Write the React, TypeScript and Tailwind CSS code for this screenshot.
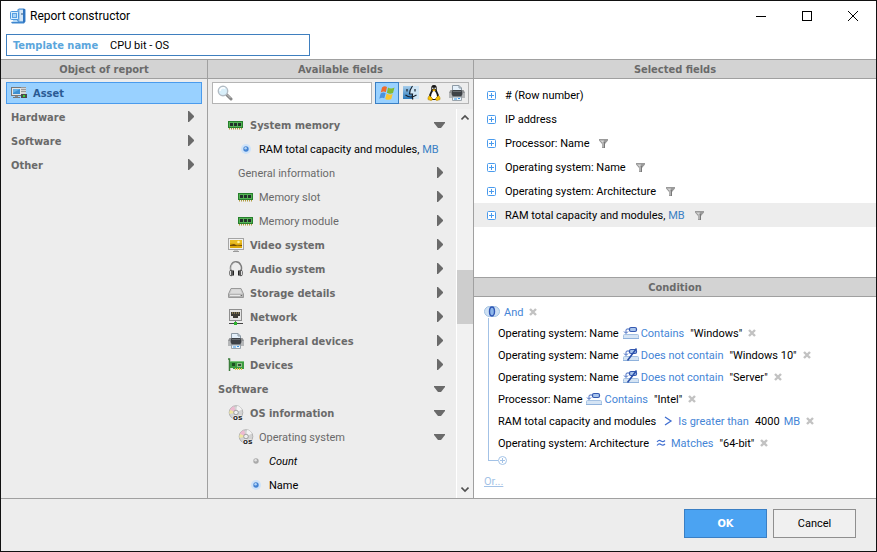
import React from 'react'

type IconProps = { className?: string }

function AppIcon() {
  return (
    <svg width="16" height="16" viewBox="0 0 16 16" className="shrink-0">
      <path d="M7.5 1.5 L9 .5 H14 L15.5 1.5 V13.5 L14 15.5 H2 L1 14 L7 13 Z" fill="#3f87cf" />
      <rect x="8.5" y="1.5" width="5.5" height="12" fill="#a9cdee" />
      <path d="M13 1 H15 V13.5 L14 14.5 H13 Z" fill="#2f74c0" />
      <rect x="10" y="2" width="3" height="11" fill="#d3e5f5" />
      <rect x="11" y="5" width="2" height="2" fill="#7f9cb8" />
      <rect x=".5" y="3.5" width="8" height="8" rx="1" fill="#d8edfc" stroke="#4d97dd" />
      <rect x="2.5" y="5.5" width="4" height="4" fill="#a9d4f7" stroke="#5aa1e3" />
      <path d="M3 12 H7 L8 14 H3 Z" fill="#b3d8f6" />
    </svg>
  )
}

function AssetIcon() {
  return (
    <svg width="16" height="16" viewBox="0 0 16 16" className="shrink-0">
      <rect x=".5" y="2.5" width="10" height="8" fill="#e6e6e6" stroke="#777" />
      <rect x="2" y="4" width="7" height="5" fill="#3d8fd1" />
      <path d="M2 4 H9 L2 8 Z" fill="#63b0e6" />
      <rect x="4" y="11" width="3" height="1" fill="#888" />
      <rect x="2" y="12" width="7" height="1" fill="#777" />
      <rect x="10" y="2" width="5" height="11" fill="#d5d5d5" />
      <path d="M10 2.5 H15 M10 4.5 H15 M10 6.5 H15" stroke="#999" />
      <rect x="10" y="9" width="6" height="4" fill="#4b4b4b" />
      <rect x="12" y="10" width="2" height="2" fill="#37d436" />
    </svg>
  )
}

function SearchIcon() {
  return (
    <svg width="16" height="16" viewBox="0 0 16 16" className="shrink-0">
      <path d="M9.5 9.5 L14 14" stroke="#888" strokeWidth="3" strokeLinecap="round" />
      <path d="M10 9.5 L13.5 13" stroke="#ccc" strokeWidth="1" />
      <circle cx="6" cy="6" r="4.7" fill="#d9effa" stroke="#b3bcc4" strokeWidth="1.4" />
      <path d="M3 6 a3 3 0 0 1 5-2.4" stroke="#fff" strokeWidth="1.4" fill="none" />
    </svg>
  )
}

function WindowsIcon() {
  return (
    <svg width="16" height="16" viewBox="0 0 16 16">
      <path d="M3 2.5 Q5.5 .5 8 2 L6.8 7.2 Q4.5 5.8 1.8 7.5 Z" fill="#ee6a2c" />
      <path d="M9 2.6 Q12 4.5 15.5 2.5 L14 8 Q11 9.5 7.9 7.8 Z" fill="#82bb32" />
      <path d="M1.6 8.5 Q4.2 6.8 6.6 8.2 L5.3 13.3 Q3 12 .3 13.7 Z" fill="#4b92dc" />
      <path d="M7.6 8.8 Q10.5 10.4 13.7 8.9 L12.3 14 Q9.5 15.6 6.2 13.9 Z" fill="#fcc52c" />
    </svg>
  )
}

function MacIcon() {
  return (
    <svg width="16" height="16" viewBox="0 0 16 16">
      <defs>
        <linearGradient id="finder" x1="0" y1="0" x2="0" y2="1">
          <stop offset="0" stopColor="#a5cdeb" />
          <stop offset="1" stopColor="#2a78bb" />
        </linearGradient>
      </defs>
      <rect x="0" y="1" width="9" height="13" fill="url(#finder)" />
      <path d="M9.5 1 H16 V14 H9.5 L9 9 H6.5 Q6.5 5 9.5 1 Z" fill="#cfe5f5" />
      <path d="M9.5 1 Q6.5 5 6.5 9 H9.5 Q9 11.5 9.8 14.5" stroke="#16212e" strokeWidth="1.2" fill="none" />
      <path d="M2.5 10 Q7.5 14 13.5 10 M4 4 V6.5 M12 4 V6.5" stroke="#16212e" strokeWidth="1.2" fill="none" />
    </svg>
  )
}

function LinuxIcon() {
  return (
    <svg width="16" height="16" viewBox="0 0 16 16">
      <path d="M8 0 C5.5 0 5 2 5.3 4.5 C5.3 6.5 3 8.5 2.7 12 L6 15 H10 L13.3 12 C13 8.5 10.7 6.5 10.7 4.5 C11 2 10.5 0 8 0 Z" fill="#171717" />
      <path d="M8 5.5 C6.5 6.5 5 9 5 12 L6.5 14 H9.5 L11 12 C11 9 9.5 6.5 8 5.5 Z" fill="#fff" />
      <circle cx="6.8" cy="3.3" r=".8" fill="#fff" />
      <circle cx="9.2" cy="3.3" r=".8" fill="#fff" />
      <path d="M6 5 Q8 3.5 10 5 L8 6.5 Z" fill="#f5b400" />
      <path d="M3.5 10.5 L6.5 13.5 Q6.5 15.7 5 15.5 L2 14.6 Q1.5 12.5 3.5 10.5 Z M12.5 10.5 L9.5 13.5 Q9.5 15.7 11 15.5 L14 14.6 Q14.5 12.5 12.5 10.5 Z" fill="#f8c200" stroke="#a87800" strokeWidth=".5" />
    </svg>
  )
}

function PrinterIcon({ className }: IconProps) {
  return (
    <svg width="16" height="16" viewBox="0 0 16 16" className={className}>
      <path d="M3.5 6 V.5 H10 L12.5 3 V6 Z" fill="#e4f0fa" stroke="#8d9aa5" />
      <path d="M10 .5 V3 H12.5" fill="none" stroke="#8d9aa5" />
      <path d="M1.5 5 H14.5 L16 7.5 V13 H0 V7.5 Z" fill="#8f9193" />
      <path d="M0 8 H3 V13 H0 Z M13 8 H16 V13 H13 Z" fill="#b5b7b9" />
      <path d="M3.5 5 H12.5 L13.5 9 L12 11.5 H4 L2.5 9 Z" fill="#3d4146" />
      <rect x="4" y="6" width="8" height="1" fill="#686d72" />
      <path d="M3.5 12 H12.5 V15.5 H3.5 Z" fill="#e9f4fd" stroke="#9aa4ac" />
      <path d="M5 14 H8 M9 13.5 H11" stroke="#3b93e0" />
    </svg>
  )
}

function MemoryIcon() {
  return (
    <svg width="16" height="16" viewBox="0 0 16 16">
      <rect x=".5" y="4.5" width="14" height="6" fill="#55b255" stroke="#26802c" />
      <path d="M2 6 H5 V9 H2 Z M6 6 H9 V9 H6 Z M10 6 H13 V9 H10 Z" fill="#22322a" />
      <path d="M1 11.5 H14" stroke="#b09a3a" strokeWidth="2" strokeDasharray="1 1" />
      <path d="M0 10.5 H15" stroke="#2b7f2f" />
    </svg>
  )
}

function VideoIcon() {
  return (
    <svg width="16" height="16" viewBox="0 0 16 16">
      <rect x=".5" y="1.5" width="15" height="11" fill="#f1f1f1" stroke="#a4a4a4" />
      <rect x="2" y="3" width="12" height="8" fill="#dba80c" />
      <path d="M2 3 H14 V6 L9 7 L2 6 Z" fill="#e9bd25" />
      <circle cx="10.5" cy="5" r="1.3" fill="#fff3a8" />
      <path d="M2 8 L6 7 L9 8.5 L14 8 V9 H2 Z" fill="#6f4b08" />
      <rect x="6" y="13" width="4" height="1" fill="#c5c5c5" />
      <rect x="5" y="14" width="6" height="1" fill="#999" />
    </svg>
  )
}

function AudioIcon() {
  return (
    <svg width="16" height="16" viewBox="0 0 16 16">
      <path d="M3.5 11 Q1.5 7 3.3 3.8 Q4.8 .8 8 .8 Q11.2 .8 12.7 3.8 Q14.5 7 12.5 11" fill="none" stroke="#7d7d7d" strokeWidth="1.5" />
      <path d="M3.5 11 Q2 7 3.8 4 Q5 1.5 8 1.5" fill="none" stroke="#d8d8d8" strokeWidth=".6" />
      <ellipse cx="3.3" cy="12" rx="2.1" ry="3.2" fill="#5a5a5a" />
      <ellipse cx="12.7" cy="12" rx="2.1" ry="3.2" fill="#5a5a5a" />
      <path d="M2.5 10 V14 M13.5 10 V14" stroke="#ddd" />
      <path d="M5.5 9.5 V14.5 M10.5 9.5 V14.5" stroke="#222" />
    </svg>
  )
}

function StorageIcon() {
  return (
    <svg width="16" height="16" viewBox="0 0 16 16">
      <path d="M3 3.5 H13 L15.5 9 V12.5 H.5 V9 Z" fill="#cfcfcf" stroke="#999" />
      <path d="M4 4.5 H12 L13.5 8 H2.5 Z" fill="#dcdcdc" />
      <rect x="1" y="9" width="14" height="3" fill="#b5b5b5" />
      <path d="M2 10.5 H12" stroke="#e9e9e9" />
      <rect x="13" y="10" width="1" height="1" fill="#6b6b6b" />
    </svg>
  )
}

function NetworkIcon() {
  return (
    <svg width="16" height="16" viewBox="0 0 16 16">
      <rect x="1.5" y=".5" width="12" height="11" fill="#e4e4e4" stroke="#8f8f8f" />
      <path d="M3 3 H12 V7 H10 V9 H5 V7 H3 Z" fill="#3c3a35" />
      <path d="M4.5 3 V5 M6.5 3 V5 M8.5 3 V5 M10.5 3 V5" stroke="#857752" />
      <path d="M7.5 12 V14" stroke="#666" />
      <path d="M1 14.5 H15" stroke="#444" />
      <rect x="6" y="13" width="3" height="3" fill="#2cb52e" />
    </svg>
  )
}

function CardIcon() {
  return (
    <svg width="16" height="16" viewBox="0 0 16 16">
      <path d="M0 2 H1.5 V14" fill="none" stroke="#3c7d3c" strokeWidth="1.5" />
      <path d="M2 4 H16 V12 H5 V11 H2 Z" fill="#3c9c40" />
      <path d="M2 4.5 H16" stroke="#7cc67c" />
      <rect x="4" y="6" width="3" height="3" fill="#1d4f22" />
      <rect x="9" y="6" width="5" height="4" fill="#8fbf87" />
      <rect x="10" y="7" width="3" height="2" fill="#31523a" />
      <path d="M7 12 H15" stroke="#e3c548" strokeWidth="2" strokeDasharray="1 1" />
    </svg>
  )
}

function DiscIcon() {
  return (
    <svg width="16" height="16" viewBox="0 0 16 16">
      <circle cx="8" cy="7.5" r="6.8" fill="#d3d3d3" stroke="#a6a6a6" strokeWidth=".8" />
      <path d="M8 7.5 L1.8 5 Q3 2 6 1.2 Z" fill="#eebad0" />
      <path d="M8 7.5 L2 5 Q1 7 1.5 9 Z" fill="#efe6a0" />
      <path d="M8 7.5 L9 .9 Q12.5 1.2 14 4.5 Z" fill="#f3f3f3" />
      <circle cx="8" cy="7.5" r="2.3" fill="#eee" stroke="#8f8f8f" strokeWidth=".8" />
      <text x="5" y="15" fontSize="8" fontWeight="bold" fontFamily="Liberation Sans, sans-serif" fill="#111" stroke="#eee" strokeWidth="1.5" paintOrder="stroke">os</text>
    </svg>
  )
}

function Bullet({ color }: { color: 'blue' | 'gray' }) {
  return (
    <svg width="12" height="12" viewBox="0 0 12 12">
      {color === 'blue' && <circle cx="6" cy="6" r="5" fill="#cfe3f8" />}
      <circle cx="6" cy="6" r="2.7" fill={color === 'blue' ? '#4383d3' : '#a9a9a9'} />
      <circle cx="5.6" cy="5.2" r="1.2" fill={color === 'blue' ? '#b4d4f5' : '#e2e2e2'} />
    </svg>
  )
}

function RightArrow() {
  return (
    <svg width="12" height="12" viewBox="0 0 12 12" className="shrink-0">
      <path d="M3 0 H4 L9 5 V6 L4 11 H3 Z" fill="#6a6a6a" />
    </svg>
  )
}

function DownArrow() {
  return (
    <svg width="12" height="12" viewBox="0 0 12 12" className="shrink-0">
      <path d="M0 3 H11 V4 L7 9 H4 L0 4 Z" fill="#6a6a6a" />
    </svg>
  )
}

function ExpandIcon() {
  return (
    <svg width="9" height="9" viewBox="0 0 9 9">
      <rect x=".5" y=".5" width="8" height="8" rx="1" fill="#fff" stroke="#4a9bed" />
      <path d="M2 4.5 H7 M4.5 2 V7" stroke="#4a9bed" />
    </svg>
  )
}

function FilterIcon() {
  return (
    <svg width="9" height="9" viewBox="0 0 9 9">
      <path d="M0 0 H9 V1.5 L6 5 V9 H3 V5 L0 1.5 Z" fill="#9a9a9a" />
      <path d="M1 1.5 H5 L4 4 Z" fill="#d8d8d8" />
      <path d="M4 4 V8" stroke="#c9c9c9" />
      <path d="M5.5 3 V9" stroke="#787878" />
    </svg>
  )
}

function RemoveIcon() {
  return (
    <svg width="8" height="8" viewBox="0 0 8 8">
      <path d="M1 1 L7 7 M7 1 L1 7" stroke="#c2c2c2" strokeWidth="2.4" />
    </svg>
  )
}

function AndIcon() {
  return (
    <svg width="16" height="12" viewBox="0 0 16 12">
      <rect x=".5" y=".5" width="15" height="10" rx="5" fill="#cfe1f3" stroke="#a3c2e2" />
      <ellipse cx="8" cy="5.5" rx="2.5" ry="4.5" fill="#8db6ea" stroke="#2f56b5" strokeWidth="1.4" />
    </svg>
  )
}

function AddIcon() {
  return (
    <svg width="9" height="9" viewBox="0 0 9 9">
      <circle cx="4.5" cy="4.5" r="4" fill="#fff" stroke="#a3c2e6" />
      <path d="M2 4.5 H7 M4.5 2 V7" stroke="#a3c2e6" />
    </svg>
  )
}

function ContainsIcon({ negated }: { negated?: boolean }) {
  return (
    <svg width="16" height="14" viewBox="0 0 16 14">
      <rect x=".5" y="8.5" width="15" height="4" rx="1" fill="#d5e4f4" stroke="#a5c1e2" />
      <path d="M0 12.5 H16" stroke="#8fb2dc" />
      <rect x="6.5" y="1.5" width="7" height="4" rx="1.5" fill="#a9c5ec" stroke="#3558b0" strokeWidth="1.2" />
      <path d="M6 3 H4 Q3 3 3 4.5 V7 M1 5.5 L3 7.5 L5 5.5" fill="none" stroke="#3d66bf" />
      {negated && <path d="M13.5 .5 L4.5 12.5" stroke="#2b50aa" strokeWidth="1.5" />}
    </svg>
  )
}

function GreaterIcon() {
  return (
    <svg width="16" height="14" viewBox="0 0 16 14">
      <path d="M5 3 L11 7 L5 11" fill="none" stroke="#3f6ed0" strokeWidth="1.3" />
    </svg>
  )
}

function MatchesIcon() {
  return (
    <svg width="16" height="14" viewBox="0 0 16 14">
      <path d="M4 6 Q6 3.5 8 5 T12 4.5 M4 9.5 Q6 7 8 8.5 T12 8" fill="none" stroke="#3f6ed0" strokeWidth="1.2" />
    </svg>
  )
}

const objects = ['Hardware', 'Software', 'Other']

// indent puts the icon (or the text, when there is no icon) at its level
const tree = [
  { label: 'System memory', icon: <MemoryIcon />, indent: 'pl-5', bold: true, open: true },
  { label: 'RAM total capacity and modules,', unit: 'MB', icon: <Bullet color="blue" />, indent: 'pl-8', leaf: true },
  { label: 'General information', indent: 'pl-[30px]' },
  { label: 'Memory slot', icon: <MemoryIcon />, indent: 'pl-[30px]' },
  { label: 'Memory module', icon: <MemoryIcon />, indent: 'pl-[30px]' },
  { label: 'Video system', icon: <VideoIcon />, indent: 'pl-5', bold: true },
  { label: 'Audio system', icon: <AudioIcon />, indent: 'pl-5', bold: true },
  { label: 'Storage details', icon: <StorageIcon />, indent: 'pl-5', bold: true },
  { label: 'Network', icon: <NetworkIcon />, indent: 'pl-5', bold: true },
  { label: 'Peripheral devices', icon: <PrinterIcon />, indent: 'pl-5', bold: true },
  { label: 'Devices', icon: <CardIcon />, indent: 'pl-5', bold: true },
  { label: 'Software', indent: 'pl-[10px]', bold: true, open: true },
  { label: 'OS information', icon: <DiscIcon />, indent: 'pl-5', bold: true, open: true },
  { label: 'Operating system', icon: <DiscIcon />, indent: 'pl-[30px]', open: true },
  { label: 'Count', icon: <Bullet color="gray" />, indent: 'pl-[42px]', leaf: true, italic: true },
  { label: 'Name', icon: <Bullet color="blue" />, indent: 'pl-[42px]', leaf: true },
]

const platforms = [
  { name: 'Windows', icon: <WindowsIcon />, active: true },
  { name: 'macOS', icon: <MacIcon /> },
  { name: 'Linux', icon: <LinuxIcon /> },
  { name: 'Printers', icon: <PrinterIcon /> },
]

const selected = [
  { label: '# (Row number)' },
  { label: 'IP address' },
  { label: 'Processor: Name', filter: true },
  { label: 'Operating system: Name', filter: true },
  { label: 'Operating system: Architecture', filter: true },
  { label: 'RAM total capacity and modules,', unit: 'MB', filter: true, active: true },
]

const conditions = [
  { field: 'Operating system: Name', icon: <ContainsIcon />, op: 'Contains', value: '"Windows"' },
  { field: 'Operating system: Name', icon: <ContainsIcon negated />, op: 'Does not contain', value: '"Windows 10"' },
  { field: 'Operating system: Name', icon: <ContainsIcon negated />, op: 'Does not contain', value: '"Server"' },
  { field: 'Processor: Name', icon: <ContainsIcon />, op: 'Contains', value: '"Intel"' },
  { field: 'RAM total capacity and modules', icon: <GreaterIcon />, op: 'Is greater than', value: '4000', unit: 'MB' },
  { field: 'Operating system: Architecture', icon: <MatchesIcon />, op: 'Matches', value: '"64-bit"' },
]

const boldFont = "font-['DejaVu_Sans_Condensed','DejaVu_Sans',sans-serif] text-[11px] leading-[15px] font-bold"

function PanelHeader({ children }: { children: React.ReactNode }) {
  return (
    <h2 className={`flex h-5 shrink-0 items-center justify-center border-y border-[#a0a0a0] bg-[#d3d3d3] text-[#6a6a6a] ${boldFont}`}>
      {children}
    </h2>
  )
}

function TitleBar() {
  return (
    <header className="flex h-[30px] items-center justify-between pl-[9px]">
      <div className="flex items-center gap-1">
        <AppIcon />
        <h1 className="text-[12px] leading-4">Report constructor</h1>
      </div>
      <div className="flex">
        <button aria-label="Minimize" className="flex h-7 w-[46px] items-center justify-center">
          <svg width="10" height="10" viewBox="0 0 10 10"><path d="M0 5.5 H10" stroke="#000" /></svg>
        </button>
        <button aria-label="Maximize" className="flex h-7 w-[46px] items-center justify-center">
          <svg width="10" height="10" viewBox="0 0 10 10"><rect x=".5" y=".5" width="9" height="9" fill="none" stroke="#000" /></svg>
        </button>
        <button aria-label="Close" className="flex h-7 w-[46px] items-center justify-center">
          <svg width="10" height="10" viewBox="0 0 10 10"><path d="M0 0 L10 10 M10 0 L0 10" stroke="#000" /></svg>
        </button>
      </div>
    </header>
  )
}

function ObjectPanel() {
  return (
    <section className="flex w-[207px] shrink-0 flex-col border-r border-[#a0a0a0]">
      <PanelHeader>Object of report</PanelHeader>
      <div className={`flex flex-col px-[5px] pt-[3px] text-[#6a6a6a] ${boldFont}`}>
        <button className="mb-px flex h-[22px] items-center gap-[6px] border border-[#4a9bed] bg-[#99d1ff] px-1 text-[#2a5a94]">
          <AssetIcon />
          Asset
        </button>
        {objects.map((name) => (
          <button key={name} className="flex h-6 items-center justify-between px-[5px]">
            {name}
            <RightArrow />
          </button>
        ))}
      </div>
    </section>
  )
}

function FieldsPanel() {
  return (
    <section className="flex w-[266px] shrink-0 flex-col border-r border-[#a0a0a0]">
      <PanelHeader>Available fields</PanelHeader>
      <div className="flex gap-[3px] px-1 pt-[3px]">
        <label className="flex h-[22px] min-w-0 flex-1 items-center gap-1 border border-[#b4b4b4] bg-white px-1">
          <SearchIcon />
          <input type="text" aria-label="Search fields" className="min-w-0 flex-1 outline-none" />
        </label>
        <div className="flex gap-px border border-[#b4b4b4]">
          {platforms.map((p) => (
            <button
              key={p.name}
              aria-label={p.name}
              className={`flex items-center justify-center ${p.active ? '-my-px -ml-px w-6 border border-[#3a7fc4] bg-[#99d1ff]' : 'w-[22px]'}`}
            >
              {p.icon}
            </button>
          ))}
        </div>
      </div>
      <div className="mt-[5px] flex flex-1">
        <ul className="min-w-0 flex-1 pt-1">
          {tree.map((row, i) => (
            <li key={i}>
              <button className={`flex h-6 w-full items-center justify-between pr-[10px] text-left ${row.indent}`}>
                <span className={`flex items-center ${row.leaf ? 'gap-[7px]' : row.bold ? 'gap-[6px]' : 'gap-[5px]'}`}>
                  {row.icon}
                  <span
                    className={`whitespace-nowrap ${row.bold ? boldFont : ''} ${row.leaf ? 'text-black' : 'text-[#6a6a6a]'} ${row.italic ? 'italic' : ''}`}
                  >
                    {row.label}
                    {row.unit && <span className="text-[#3a7fc4]"> {row.unit}</span>}
                  </span>
                </span>
                {!row.leaf && (row.open ? <DownArrow /> : <RightArrow />)}
              </button>
            </li>
          ))}
        </ul>
        <div className="flex w-[17px] shrink-0 flex-col items-center border-l border-white bg-[#f1f1f1] py-[5px]">
          <svg width="8" height="8" viewBox="0 0 8 8"><path d="M.5 5.5 L4 2 L7.5 5.5" fill="none" stroke="#505050" strokeWidth="1.6" /></svg>
          <div className="mt-[148px] mb-auto h-[54px] w-full bg-[#cdcdcd]" />
          <svg width="8" height="8" viewBox="0 0 8 8"><path d="M.5 2.5 L4 6 L7.5 2.5" fill="none" stroke="#505050" strokeWidth="1.6" /></svg>
        </div>
      </div>
    </section>
  )
}

function SelectedFields() {
  return (
    <>
      <PanelHeader>Selected fields</PanelHeader>
      <ul className="h-[198px] shrink-0 pt-1">
        {selected.map((row) => (
          <li key={row.label} className={`flex h-6 items-center pl-[13px] ${row.active ? 'bg-[#ededed]' : ''}`}>
            <button aria-label="Expand" className="mr-[9px]"><ExpandIcon /></button>
            <span>
              {row.label}
              {row.unit && <span className="text-[#3a7fc4]"> {row.unit}</span>}
            </span>
            {row.filter && <button aria-label="Filter" className="ml-[10px]"><FilterIcon /></button>}
          </li>
        ))}
      </ul>
    </>
  )
}

function ConditionPanel() {
  return (
    <>
      <PanelHeader>Condition</PanelHeader>
      <div className="flex-1 px-[10px] pt-[5px]">
        <div className="flex h-5 items-center gap-1 text-[#4585d6]">
          <AndIcon />
          <button>And</button>
          <button aria-label="Remove group" className="ml-[2px]"><RemoveIcon /></button>
        </div>
        <div className="ml-1 flex">
          <div className="-mt-1 mb-1 w-[10px] shrink-0 border-b border-l border-[#a3c2e6]" />
          <div>
            <ul>
              {conditions.map((c, i) => (
                <li key={i} className="flex h-[22px] items-center">
                  <span>{c.field}</span>
                  <span className="ml-1">{c.icon}</span>
                  <button className="ml-[2px] text-[#4585d6]">{c.op}</button>
                  <button className="ml-[6px]">{c.value}</button>
                  {c.unit && <button className="ml-1 text-[#4585d6]">{c.unit}</button>}
                  <button aria-label="Remove condition" className="ml-[6px]"><RemoveIcon /></button>
                </li>
              ))}
            </ul>
            <button aria-label="Add condition" className="mt-[2px] block"><AddIcon /></button>
          </div>
        </div>
        <a href="#" className="mt-[9px] block w-fit text-[#a3c2e6] underline">Or...</a>
      </div>
    </>
  )
}

export default function App() {
  return (
    <div className="flex min-h-screen flex-col border border-[#111] bg-white font-['Roboto',sans-serif] text-[11px] leading-[15px] text-black">
      <TitleBar />
      <div className="px-[5px] pt-[3px] pb-[3px]">
        <label className="flex h-[22px] w-[304px] items-center gap-3 border border-[#3f7fbf] px-[6px]">
          <span className={`text-[#5ba6dc] ${boldFont}`}>Template name</span>
          <input type="text" defaultValue="CPU bit - OS" className="min-w-0 flex-1 outline-none" />
        </label>
      </div>
      <main className="flex flex-1 bg-[#ededed]">
        <ObjectPanel />
        <FieldsPanel />
        <section className="flex min-w-0 flex-1 flex-col bg-white">
          <SelectedFields />
          <ConditionPanel />
        </section>
      </main>
      <footer className="flex justify-end gap-[6px] border-t border-[#a0a0a0] bg-[#ededed] px-5 pb-[13px] pt-[10px]">
        <button className={`h-[29px] w-[83px] border border-[#3a7fc4] bg-[#4ba3f2] text-white ${boldFont}`}>OK</button>
        <button className="h-[29px] w-[83px] border border-[#8f8f8f] bg-[#f0f0f0]">Cancel</button>
      </footer>
    </div>
  )
}
